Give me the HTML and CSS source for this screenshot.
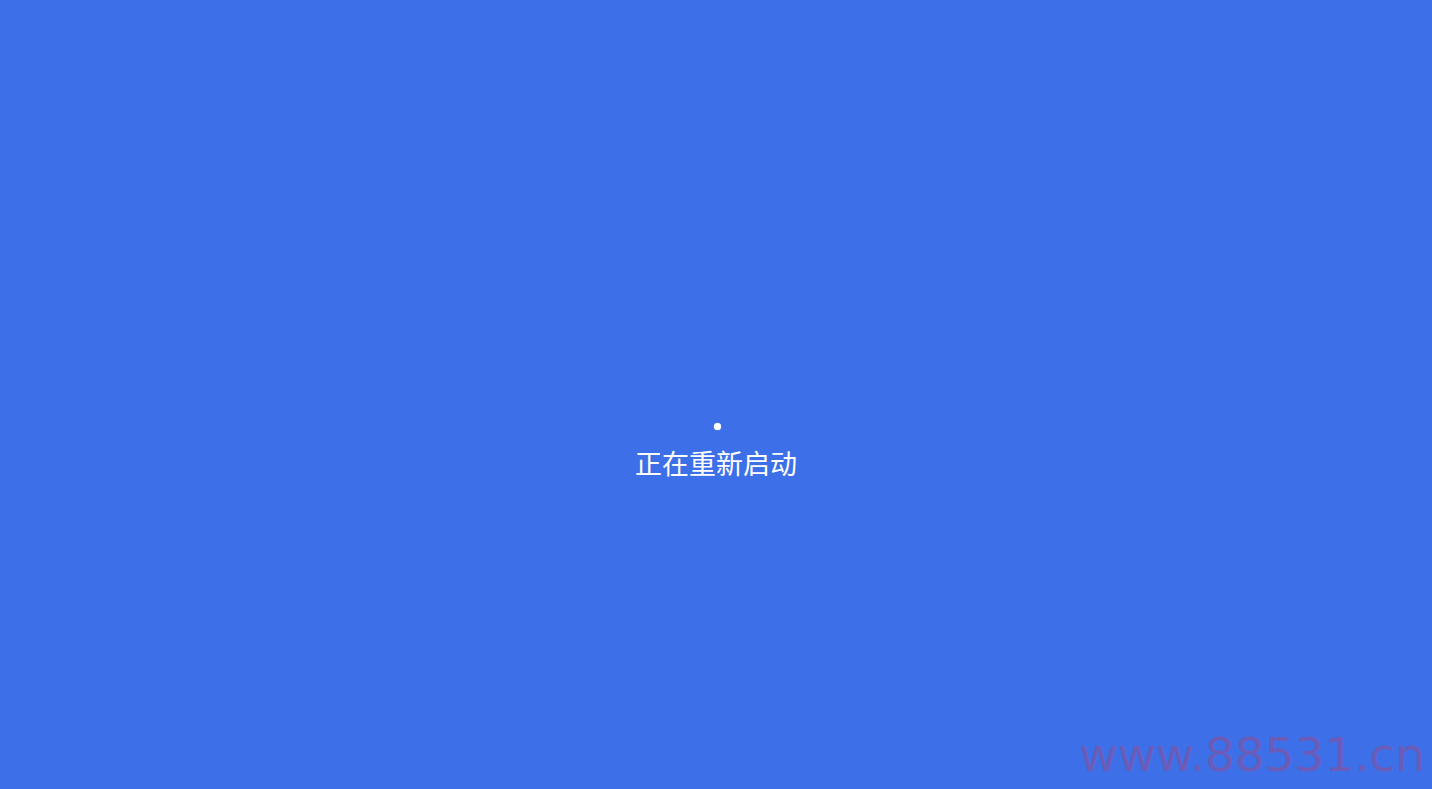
FILE: index.html
```html
<!DOCTYPE html>
<html lang="zh-CN">
<head>
<meta charset="utf-8">
<title>正在重新启动</title>
<link rel="stylesheet" href="styles.css">
</head>
<body>
<main class="screen">
  <div class="status">
    <span class="dot"></span>
    <p class="label">正在重新启动</p>
  </div>
  <div class="watermark">www.88531.cn</div>
</main>
</body>
</html>
```

FILE: styles.css
```css
html, body {
  margin: 0;
  padding: 0;
  height: 100%;
  background: #3d70e8;
  overflow: hidden;
}
.screen {
  position: relative;
  height: 789px;
  display: flex;
  flex-direction: column;
  align-items: center;
  padding-top: 423px;
  box-sizing: border-box;
}
.status {
  display: flex;
  flex-direction: column;
  align-items: center;
}
.dot {
  width: 7px;
  height: 7px;
  margin-left: 2px;
  border-radius: 50%;
  background: #ffffff;
  box-shadow: 0 0 1px 0 rgba(255,255,255,0.8);
}
.label {
  margin: 15px 0 0 0;
  color: #ffffff;
  font-family: "Microsoft YaHei", "Noto Sans CJK SC", sans-serif;
  font-size: 27px;
  line-height: 35px;
  letter-spacing: 0;
}
.watermark {
  position: absolute;
  right: 7px;
  bottom: 6px;
  font-family: "DejaVu Sans", Verdana, sans-serif;
  font-size: 47px;
  line-height: 56px;
  color: #6a5cb8;
}
```
